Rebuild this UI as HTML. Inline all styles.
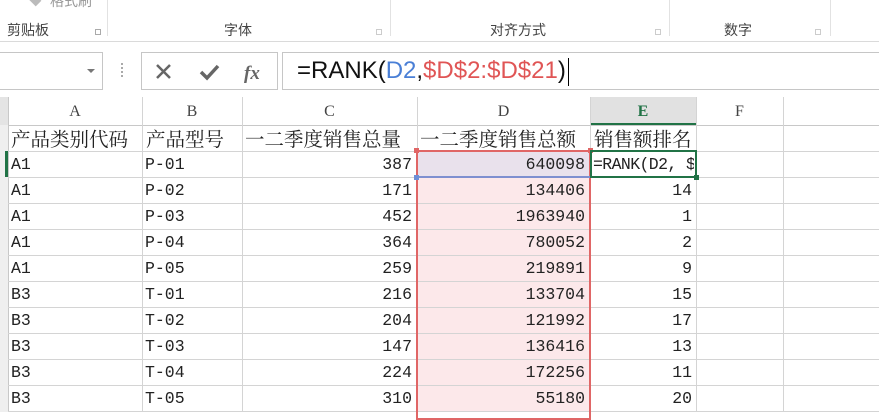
<!DOCTYPE html>
<html><head><meta charset="utf-8"><style>
*{margin:0;padding:0;box-sizing:border-box}
body{width:879px;height:412px;overflow:hidden;background:#fff;position:relative;font-family:"Liberation Mono","Noto Serif CJK SC",monospace}
.abs{position:absolute}
.rib{font-family:"Liberation Sans","Noto Sans CJK SC",sans-serif;font-size:14px;color:#444}
.vl{position:absolute;width:1px;background:#d4d4d4}
.hl{position:absolute;height:1px;background:#d4d4d4}
.cell{position:absolute;font-size:16.5px;color:#222;height:26px;line-height:27px;white-space:nowrap;overflow:hidden}
.cj{font-family:"Noto Serif CJK SC","Noto Sans CJK SC",serif;font-size:19.5px;line-height:26px}
.ch{position:absolute;top:97px;height:28px;line-height:30px;text-align:center;font-size:16px;color:#444;font-family:"Liberation Serif",serif}
</style></head><body>
<!-- ribbon -->
<div class="abs rib" style="left:50px;top:-9px;color:#999;font-size:14px">格式刷</div>
<div class="abs" style="left:30px;top:-4px;width:10px;height:8px;background:#bbb;transform:rotate(45deg)"></div>
<div class="abs rib" style="left:7px;top:20px">剪贴板</div>
<div class="abs rib" style="left:224px;top:20px">字体</div>
<div class="abs rib" style="left:490px;top:20px">对齐方式</div>
<div class="abs rib" style="left:724px;top:20px">数字</div>
<div class="abs" style="left:95px;top:29px;width:6px;height:6px;border:1px solid #aaa"></div>
<div class="abs" style="left:376px;top:29px;width:6px;height:6px;border:1px solid #ccc"></div>
<div class="abs" style="left:655px;top:29px;width:6px;height:6px;border:1px solid #ccc"></div>
<div class="abs" style="left:815px;top:29px;width:6px;height:6px;border:1px solid #ccc"></div>
<div class="vl" style="left:107px;top:0;height:36px;background:#e2e2e2"></div>
<div class="vl" style="left:390px;top:0;height:36px;background:#e2e2e2"></div>
<div class="vl" style="left:669px;top:0;height:36px;background:#e2e2e2"></div>
<div class="vl" style="left:830px;top:0;height:36px;background:#e2e2e2"></div>
<div class="hl" style="left:0;top:41px;width:879px;background:#dadada"></div>
<!-- formula bar -->
<div class="abs" style="left:-1px;top:52px;width:104px;height:38px;border:1px solid #c6c6c6"></div>
<div class="abs" style="left:87px;top:69px;border-left:4px solid transparent;border-right:4px solid transparent;border-top:4px solid #777"></div>
<div class="abs" style="left:121px;top:63px;width:2px;height:14px;border-left:2px dotted #aaa"></div>
<div class="abs" style="left:141px;top:52px;width:137px;height:38px;border:1px solid #c6c6c6"></div>
<svg class="abs" style="left:150px;top:60px" width="120" height="24"><path d="M7 5 L20 18 M20 5 L7 18" stroke="#666" stroke-width="2.5"/><path d="M51 12 L57 18 L68 6" stroke="#666" stroke-width="3.5" fill="none"/><text x="94" y="19" font-family="Liberation Serif" font-style="italic" font-weight="bold" font-size="19" fill="#666">fx</text></svg>
<div class="abs" style="left:282px;top:52px;width:600px;height:38px;border:1px solid #c6c6c6"></div>
<div class="abs" style="left:297px;top:55px;font-family:'Liberation Sans',sans-serif;font-size:24px;line-height:32px;color:#111;white-space:nowrap">=RANK(<span style="color:#4a7fd6">D2</span>,<span style="color:#e05555">$D$2:$D$21</span>)<span style="display:inline-block;width:1px;height:28px;background:#000;vertical-align:middle;margin-left:2px"></span></div>
<!-- column headers -->
<div class="abs" style="left:0;top:97px;width:8px;height:28px;background:#e4e4e4"></div>
<div class="abs" style="left:590px;top:97px;width:106px;height:28px;background:#e1e1e1;border-bottom:2px solid #217346"></div>
<div class="ch" style="left:8px;width:134px">A</div>
<div class="ch" style="left:142px;width:100px">B</div>
<div class="ch" style="left:242px;width:175px">C</div>
<div class="ch" style="left:417px;width:173px">D</div>
<div class="ch" style="left:590px;width:106px;color:#217346;font-weight:bold">E</div>
<div class="ch" style="left:696px;width:87px">F</div>
<div class="hl" style="left:0;top:125px;width:879px;background:#c8c8c8"></div>
<!-- D range fill -->
<div class="abs" style="left:417px;top:151px;width:173px;height:261px;background:#fce8ea"></div>
<div class="abs" style="left:417px;top:151px;width:173px;height:26px;background:#e9e1ec"></div>
<!-- grid lines -->
<div class="vl" style="left:8px;top:97px;height:315px;background:#c8c8c8"></div>
<div class="vl" style="left:142px;top:97px;height:315px"></div>
<div class="vl" style="left:242px;top:97px;height:315px"></div>
<div class="vl" style="left:417px;top:97px;height:315px"></div>
<div class="vl" style="left:590px;top:97px;height:315px"></div>
<div class="vl" style="left:696px;top:97px;height:315px"></div>
<div class="vl" style="left:783px;top:97px;height:315px"></div>
<div class="hl" style="left:8px;top:151px;width:871px"></div>
<div class="hl" style="left:8px;top:177px;width:871px"></div>
<div class="hl" style="left:8px;top:203px;width:871px"></div>
<div class="hl" style="left:8px;top:229px;width:871px"></div>
<div class="hl" style="left:8px;top:255px;width:871px"></div>
<div class="hl" style="left:8px;top:281px;width:871px"></div>
<div class="hl" style="left:8px;top:307px;width:871px"></div>
<div class="hl" style="left:8px;top:333px;width:871px"></div>
<div class="hl" style="left:8px;top:359px;width:871px"></div>
<div class="hl" style="left:8px;top:385px;width:871px"></div>
<div class="hl" style="left:8px;top:411px;width:871px"></div>
<div class="abs" style="left:0;top:125px;width:8px;height:287px;background:#efefef"></div>
<div class="abs" style="left:5px;top:151px;width:3px;height:26px;background:#217346"></div>
<!-- D border -->
<div class="abs" style="left:416px;top:150px;width:175px;height:270px;border:2px solid #e06666"></div>
<div class="abs" style="left:416px;top:176px;width:175px;height:2px;background:#7e8fd0"></div>
<div class="abs" style="left:414px;top:148px;width:5px;height:5px;background:#e06666"></div>
<div class="abs" style="left:588px;top:148px;width:5px;height:5px;background:#e06666"></div>
<div class="abs" style="left:414px;top:175px;width:5px;height:5px;background:#6e8fd6"></div>
<!-- E2 -->
<div class="abs" style="left:590px;top:150px;width:107px;height:28px;border:2px solid #217346"></div>
<div class="abs" style="left:694px;top:175px;width:5px;height:5px;background:#217346"></div>
<!-- header row -->
<div class="cell cj" style="left:11px;top:125px">产品类别代码</div>
<div class="cell cj" style="left:146px;top:125px">产品型号</div>
<div class="cell cj" style="left:245px;top:125px;width:170px">一二季度销售总量</div>
<div class="cell cj" style="left:420px;top:125px;width:170px">一二季度销售总额</div>
<div class="cell cj" style="left:594px;top:125px;width:102px">销售额排名</div>
<div class="cell" style="left:593px;top:151px;width:101px;letter-spacing:-0.6px">=RANK(D2, $D</div>
<div id="rows"></div>
<script>
var d=[["A1","P-01",387,640098,""],["A1","P-02",171,134406,14],["A1","P-03",452,1963940,1],["A1","P-04",364,780052,2],["A1","P-05",259,219891,9],["B3","T-01",216,133704,15],["B3","T-02",204,121992,17],["B3","T-03",147,136416,13],["B3","T-04",224,172256,11],["B3","T-05",310,55180,20]];
var h="";d.forEach(function(r,i){var t=151+i*26;
h+='<div class="cell" style="left:11px;top:'+t+'px">'+r[0]+'</div>';
h+='<div class="cell" style="left:145px;top:'+t+'px">'+r[1]+'</div>';
h+='<div class="cell" style="left:242px;width:170px;text-align:right;top:'+t+'px">'+r[2]+'</div>';
h+='<div class="cell" style="left:417px;width:168px;text-align:right;top:'+t+'px">'+r[3]+'</div>';
if(r[4]!=="")h+='<div class="cell" style="left:590px;width:102px;text-align:right;top:'+t+'px">'+r[4]+'</div>';});
document.getElementById("rows").innerHTML=h;
</script>
</body></html>
